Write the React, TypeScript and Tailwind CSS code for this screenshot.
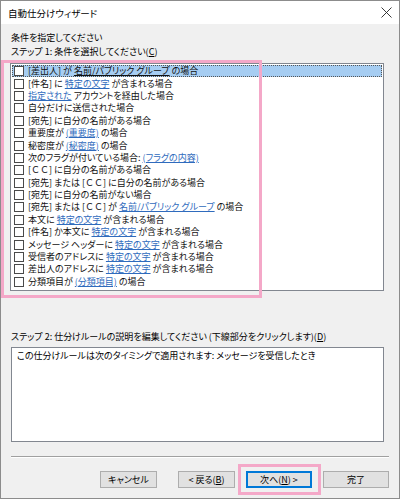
import React from "react";

type Part = string | { link: string } | { cc: true };

const CC: Part = { cc: true };

const rows: Part[][] = [
  ["[差出人] が ", { link: "名前/パブリック グループ" }, " の場合"],
  ["[件名] に ", { link: "特定の文字" }, " が含まれる場合"],
  [{ link: "指定された" }, " アカウントを経由した場合"],
  ["自分だけに送信された場合"],
  ["[宛先] に自分の名前がある場合"],
  ["重要度が ", { link: "(重要度)" }, " の場合"],
  ["秘密度が ", { link: "(秘密度)" }, " の場合"],
  ["次のフラグが付いている場合: ", { link: "(フラグの内容)" }],
  [CC, " に自分の名前がある場合"],
  ["[宛先] または ", CC, " に自分の名前がある場合"],
  ["[宛先] に自分の名前がない場合"],
  ["[宛先] または ", CC, " が ", { link: "名前/パブリック グループ" }, " の場合"],
  ["本文に ", { link: "特定の文字" }, " が含まれる場合"],
  ["[件名] か本文に ", { link: "特定の文字" }, " が含まれる場合"],
  ["メッセージ ヘッダーに ", { link: "特定の文字" }, " が含まれる場合"],
  ["受信者のアドレスに ", { link: "特定の文字" }, " が含まれる場合"],
  ["差出人のアドレスに ", { link: "特定の文字" }, " が含まれる場合"],
  ["分類項目が ", { link: "(分類項目)" }, " の場合"],
];

function Row({ parts, selected }: { parts: Part[]; selected: boolean }) {
  return (
    <div
      className={
        "flex items-center h-[12.4px] pl-[2px] whitespace-pre " +
        (selected
          ? "bg-[#a6cdf2] outline outline-1 outline-dotted outline-[#555] -outline-offset-1"
          : "")
      }
    >
      <span className="inline-block w-[10px] h-[10px] border border-[#4a4a4a] bg-white mr-[4px] shrink-0" />
      <span className="text-[#111]">
        {parts.map((p, i) => {
          if (typeof p === "string") return <span key={i}>{p}</span>;
          if ("cc" in p)
            return (
              <span key={i}>
                [<span className="[font-feature-settings:normal]">ＣＣ</span>]
              </span>
            );
          return (
            <span
              key={i}
              className={
                "underline underline-offset-[1px] " +
                (selected ? "text-[#111]" : "text-[#2f6bbd]")
              }
            >
              {p.link}
            </span>
          );
        })}
      </span>
    </div>
  );
}

function Btn({
  children,
  w,
  primary,
  className,
}: {
  children: React.ReactNode;
  w: string;
  primary?: boolean;
  className?: string;
}) {
  return (
    <div
      className={
        "h-[17px] flex items-center justify-center bg-[#e1e1e1] " +
        w +
        " " +
        (primary ? "border-2 border-[#0078d7]" : "border border-[#adadad]") +
        " " +
        (className ?? "")
      }
    >
      {children}
    </div>
  );
}

export default function App() {
  return (
    <div
      className="relative w-[400px] h-[499px] bg-[#f0f0f0] border-l border-r border-b border-[#8c8c8c] text-[9px] leading-[12px] text-black overflow-hidden [font-feature-settings:'palt']"
      style={{ fontFamily: '"Noto Sans CJK JP", "Noto Sans", sans-serif' }}
    >
      {/* title bar */}
      <div className="h-[24px] bg-white flex items-center justify-between pl-[7px] pr-[6px] border-t border-[#8c8c8c]">
        <span className="text-[9.5px]">自動仕分けウィザード</span>
        <svg width="11" height="11" viewBox="0 0 11 11" className="mr-[1px]">
          <path d="M0.5 0.5 L10.5 10.5 M10.5 0.5 L0.5 10.5" stroke="#222" strokeWidth="0.9" fill="none" />
        </svg>
      </div>

      <div className="pl-[9px] pr-[10px]">
        <div className="mt-[8px] h-[12px] pl-[1px]">条件を指定してください</div>
        <div className="mt-[2px] h-[12px] pl-[1px]">
          ステップ 1: 条件を選択してください(<span className="underline">C</span>)
        </div>

        {/* list box */}
        <div className="mt-[5px] w-[374px] h-[228px] bg-white border border-[#828790] pt-[1px] pl-[1px] pr-[1px]">
          {rows.map((r, i) => (
            <Row key={i} parts={r} selected={i === 0} />
          ))}
        </div>

        <div className="mt-[40px] h-[12px] pl-[1px]">
          ステップ 2: 仕分けルールの説明を編集してください (下線部分をクリックします)(
          <span className="underline">D</span>)
        </div>

        <div className="mt-[4px] ml-[1px] w-[373px] h-[95px] bg-white border border-[#828790] pl-[5px] pt-[2px]">
          この仕分けルールは次のタイミングで適用されます: メッセージを受信したとき
        </div>

        <div className="mt-[14px] ml-[1px] w-[378px] h-[2px] border-t border-[#a0a0a0] border-b border-b-white" />

        <div className="mt-[13px] flex justify-end w-[379px]">
          <Btn w="w-[57px]">キャンセル</Btn>
          <Btn w="w-[57px]" className="ml-[21px]">
            &lt; 戻る(<span className="underline">B</span>)
          </Btn>
          <Btn w="w-[66px]" primary className="ml-[11px]">
            次へ(<span className="underline">N</span>) &gt;
          </Btn>
          <Btn w="w-[66px]" className="ml-[11px]">完了</Btn>
        </div>
      </div>

      {/* pink annotation boxes */}
      <div className="absolute left-0 top-[60px] w-[261px] h-[238px] border-[3px] border-[#f4a8c8] pointer-events-none" />
      <div className="absolute left-[237px] top-[464px] w-[83px] h-[31px] border-[3px] border-[#f4a8c8] pointer-events-none" />
    </div>
  );
}
